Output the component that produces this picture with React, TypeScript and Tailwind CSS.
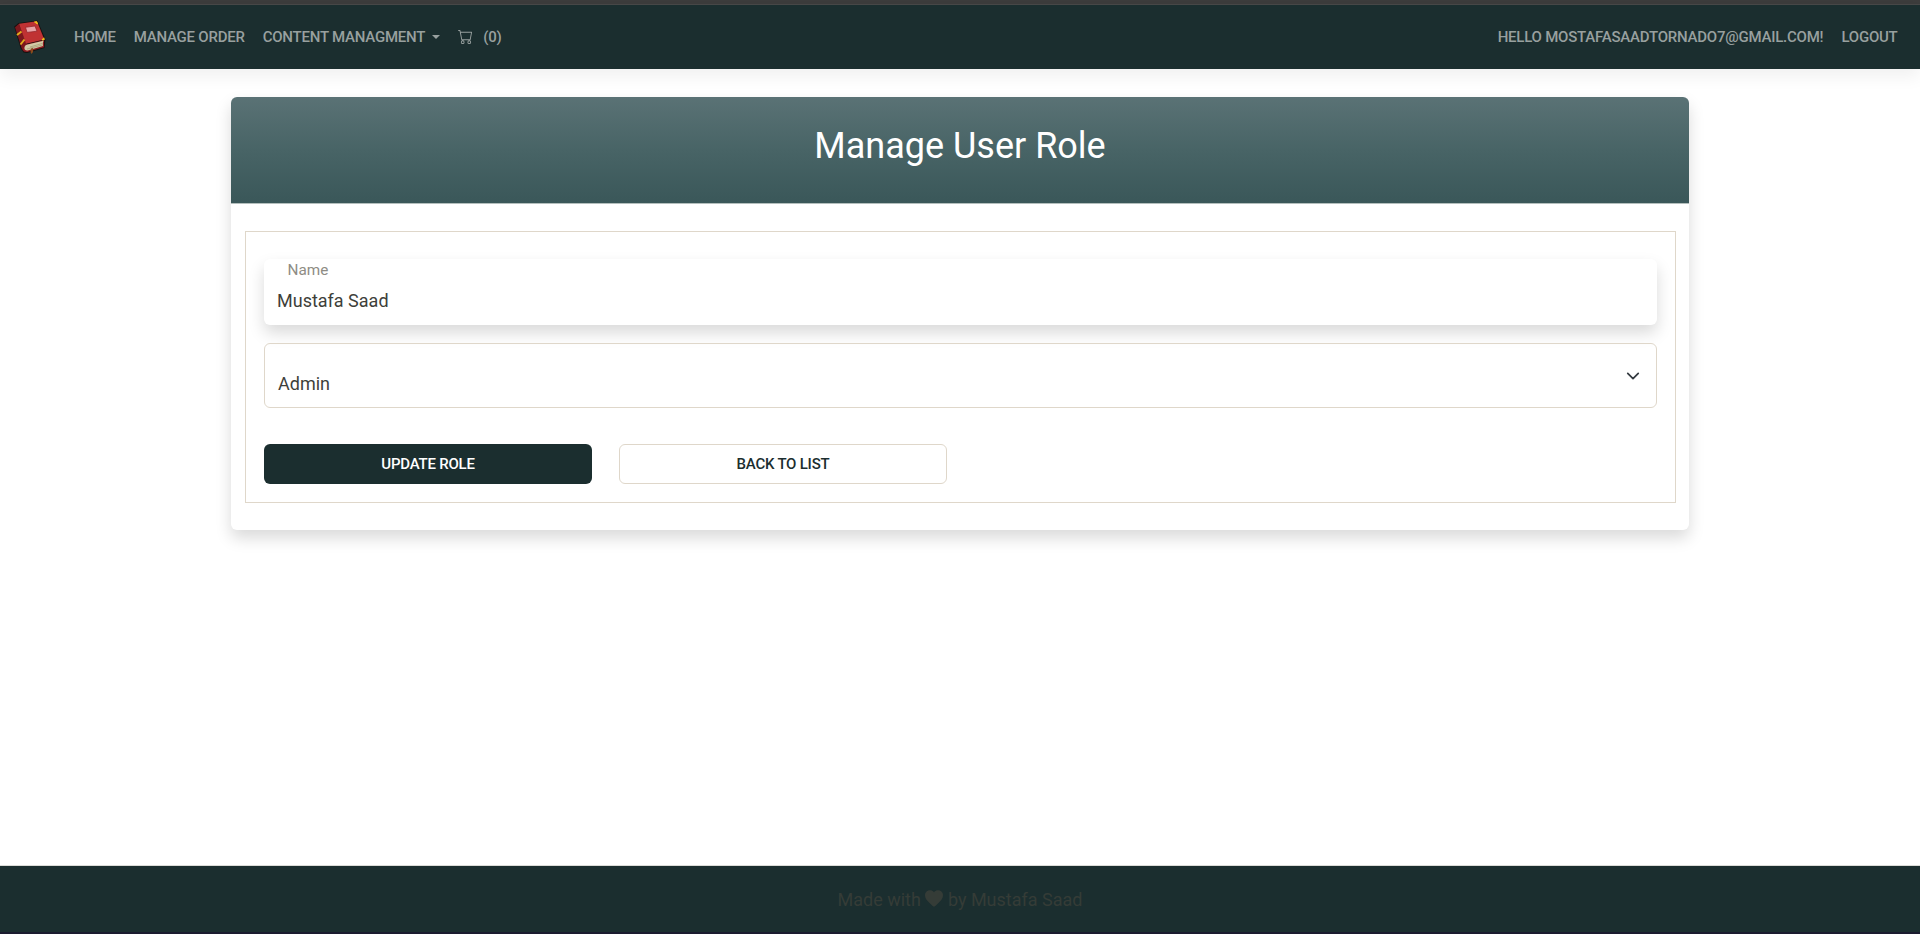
import { BsCart } from "react-icons/bs";

function BookLogo() {
  return (
    <svg width="32" height="36" viewBox="0 0 32 36" className="block">
      <path d="M.2 7.500 L4.500 4 L23.500 1.500 L31.500 20.500 L30.500 29 L13 34 L9.500 33.500 L6.500 29 Z" fill="#16100f" />
      <path d="M1 8.200 L5 4.800 L12.500 25 L9.500 32.500 L7.500 29 Z" fill="#7c181d" />
      <path d="M5 4.800 L23 2.300 L30.300 20.500 L12 24.800 Z" fill="#c03233" />
      <path d="M9 30 L12 25.500 L30 21 L30 28.300 L13 33 L10 32.600 Z" fill="#8f1c22" />
      <path d="M10.500 30 Q10 26 13.500 25.500 L29.500 21.800 Q28 24.500 29 27 L14.500 31.300 Q11 32 10.500 30 Z" fill="#d3cba6" />
      <path d="M13 30 L28.500 26 M16 28 L28 24.500" stroke="#8f865f" strokeWidth=".5" />
      <path d="M11.500 8.300 L21 7 L23 12.200 L13 13.400 Z" fill="#e9a3a6" stroke="#8f1c22" strokeWidth=".7" />
      <path d="M3 16 L7.500 12.500 M6.500 25.500 L10.500 20.500" stroke="#e2ac1d" strokeWidth="2" />
      <path d="M20.500 3 L22.700 2.700 L23.500 5 Z M28 21 L29.800 18.800 L30.300 20.500 Z" fill="#f0c419" stroke="#f0c419" />
      <path d="M17 29.500 L19 29 L19 33 L17.500 35 L16.500 33 Z" fill="#8a4a1c" />
    </svg>
  );
}

function Heart() {
  return (
    <svg width="18" height="17" viewBox="0 0 18 17" fill="currentColor" className="-mt-px">
      <path d="M9 2.200 C7.800 .8 6.500 .2 4.900 .2 C2.100 .2 0 2.400 0 5.300 C0 8.400 2 10.700 4.800 13.300 L7.700 16 Q9 17.100 10.300 16 L13.200 13.300 C16 10.700 18 8.400 18 5.300 C18 2.400 15.900 .2 13.100 .2 C11.500 .2 10.200 .8 9 2.200 Z" />
    </svg>
  );
}

const navLink = "whitespace-nowrap text-[15px] font-medium leading-[22px] tracking-[-0.225px]";

export default function App() {
  return (
    <div className="flex h-[934px] flex-col bg-white font-['Roboto',sans-serif] text-[#3e3f3a]">
      <div className="h-[5px] shrink-0 border-b border-[#484848] bg-[#3c3c3c]" />
      <nav className="flex h-16 shrink-0 items-center bg-[#1b2e2f] pl-[14px] pr-[22.5px] text-[#98a09f] shadow-[0_8px_16px_rgba(0,0,0,0.06)]">
        <BookLogo />
        <div className="ml-7 flex items-center gap-[18px]">
          <a className={navLink}>HOME</a>
          <a className={navLink}>MANAGE ORDER</a>
          <a className={`${navLink} flex items-center`}>
            CONTENT MANAGMENT
            <span className="ml-[7px] border-x-4 border-t-4 border-x-transparent border-t-[#98a09f]" />
          </a>
          <a className={`${navLink} flex items-center gap-[10px]`}>
            <BsCart size={15} className="-mt-px" />
            (0)
          </a>
        </div>
        <div className="ml-auto flex items-center gap-[18px]">
          <a className={navLink}>HELLO MOSTAFASAADTORNADO7@GMAIL.COM!</a>
          <a className={navLink}>LOGOUT</a>
        </div>
      </nav>

      <main className="flex-1 pt-7">
        <section className="mx-auto h-[433px] w-[1458px] rounded-md bg-white shadow-[0_8px_16px_rgba(0,0,0,0.15)]">
          <header className="h-[107px] rounded-t-md border-b border-[#b4bfbd] bg-linear-to-b from-[#5a7275] via-[#486466] to-[#3a5759] pt-7 text-center">
            <h1 className="text-[36px] leading-[43px] text-white">Manage User Role</h1>
          </header>
          <div className="ml-[14px] mt-[27px] h-[272px] w-[1431px] border border-[#dfd7ca] px-[18px] pt-[27px]">
            <div className="h-[66px] rounded-md bg-white px-[13px] pt-1 shadow-[0_8px_16px_rgba(0,0,0,0.15)]">
              <label className="block pl-[10.5px] text-[15.3px] leading-[15px] text-[#8e8c84]">Name</label>
              <div className="mt-[9px] text-[18px] leading-[27px]">Mustafa Saad</div>
            </div>
            <div className="mt-[18px] flex h-[65px] items-start justify-between rounded-md border border-[#dfd7ca] pl-[13px] pr-4 pt-[25px]">
              <span className="mt-px text-[18px] leading-[27px]">Admin</span>
              <svg width="14" height="14" viewBox="0 0 16 16" fill="none">
                <path d="m2 5 6 6 6-6" stroke="#343a40" strokeWidth="2" strokeLinecap="round" strokeLinejoin="round" />
              </svg>
            </div>
            <div className="mt-9 flex gap-[27px] text-[15px] font-medium tracking-[-0.225px]">
              <button className="h-10 w-[328px] rounded-md bg-[#1b2e2f] text-white">UPDATE ROLE</button>
              <button className="h-10 w-[328px] rounded-md border border-[#dfd7ca] text-[#1b2e2f]">BACK TO LIST</button>
            </div>
          </div>
        </section>
      </main>

      <footer className="flex h-[69px] shrink-0 items-center justify-center gap-[4.5px] border-b-2 border-t border-b-[#1b1b2f] border-t-[#dcdcd8] bg-[#1b2e2f] text-[18px] text-[#353c37]">
        <span>Made with</span>
        <Heart />
        <span>by Mustafa Saad</span>
      </footer>
    </div>
  );
}
